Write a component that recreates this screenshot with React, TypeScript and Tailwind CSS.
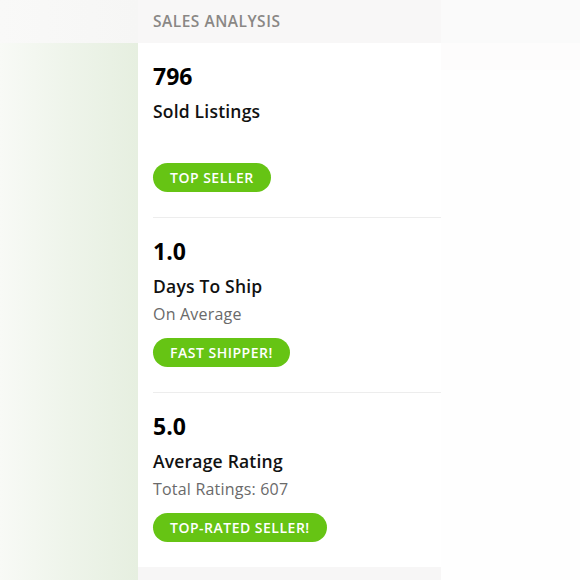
const stats = [
  { value: "796", title: "Sold Listings", sub: "", badge: "TOP SELLER" },
  { value: "1.0", title: "Days To Ship", sub: "On Average", badge: "FAST SHIPPER!" },
  { value: "5.0", title: "Average Rating", sub: "Total Ratings: 607", badge: "TOP-RATED SELLER!" },
];

function StatBlock({ value, title, sub, badge, last }: { value: string; title: string; sub: string; badge: string; last: boolean }) {
  return (
    <div className={`pt-[19px] pb-[25px] ${last ? "" : "border-b border-[#ededed]"}`}>
      <div className="text-[23px] leading-[28px] font-bold text-black">{value}</div>
      <div className="mt-[9px] text-[17.5px] leading-[24px] font-semibold tracking-[0.2px] text-[#111]">{title}</div>
      <div className="mt-[5px] h-[22px] text-[16px] leading-[22px] tracking-[0.2px] text-[#6a6a6a]">{sub}</div>
      <div className="mt-[13px] flex">
        <span className="rounded-full bg-[#66c414] px-[17px] h-[29px] flex items-center text-[14px] font-semibold tracking-[0.5px] text-white">
          {badge}
        </span>
      </div>
    </div>
  );
}

export default function App() {
  return (
    <div className="flex w-[580px] h-[580px] overflow-hidden bg-white" style={{ fontFamily: "'Open Sans', Lato, sans-serif" }}>
      {/* blurred left backdrop */}
      <div className="w-[138px] h-full flex flex-col">
        <div className="h-[43px] bg-gradient-to-r from-[#f9f9f8] to-[#f6f6f5]" />
        <div className="flex-1 bg-gradient-to-r from-[#f8faf6] via-[#eef4ea] to-[#e6efe0]" />
      </div>

      {/* panel */}
      <div className="w-[303px] h-full flex flex-col">
        <div className="h-[43px] bg-[#f8f7f7] pl-[15px] flex items-center text-[15.5px] font-semibold tracking-[0.5px] text-[#8a8785]">
          SALES ANALYSIS
        </div>
        <div className="pl-[15px] bg-white">
          {stats.map((s, i) => (
            <StatBlock key={s.value} {...s} last={i === stats.length - 1} />
          ))}
        </div>
        <div className="flex-1 bg-[#f7f6f6]" />
      </div>

      {/* right side */}
      <div className="flex-1 h-full flex flex-col">
        <div className="h-[43px] bg-[#fafafa]" />
        <div className="h-[27px] bg-[#fdfcfc]" />
        <div className="flex-1 bg-[#fefefe]" />
      </div>
    </div>
  );
}
